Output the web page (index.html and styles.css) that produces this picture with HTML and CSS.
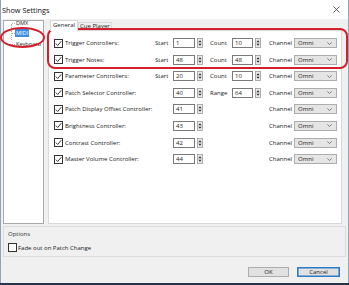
FILE: index.html
```html
<!DOCTYPE html>
<html>
<head>
<meta charset="utf-8">
<title>Show Settings</title>
<link rel="stylesheet" href="styles.css">
</head>
<body>
<div class="window">
  <div class="titlebar">
    <span class="title">Show Settings</span>
    <span class="close"><svg width="7" height="7" viewBox="0 0 7 7"><path d="M0.5 0.5L6.5 6.5M6.5 0.5L0.5 6.5" stroke="#333" stroke-width="0.8" fill="none"/></svg></span>
  </div>
  <div class="main">
    <div class="tree">
      <div class="tree-list">
        <div class="node">DMX</div>
        <div class="node"><span class="sel">MIDI</span></div>
        <div class="node">Keyboard</div>
      </div>
    </div>
    <div class="tabs">
      <div class="tabstrip">
        <div class="tab active">General</div>
        <div class="tab">Cue Player</div>
      </div>
      <div class="panel">
        <div class="row">
          <span class="cb checked"><svg width="7" height="7" viewBox="0 0 7 7"><path d="M0.8 3.6L2.7 5.5L6.3 1.2" stroke="#222" stroke-width="0.9" fill="none"/></svg></span>
          <span class="lbl">Trigger Controllers:</span>
          <span class="cap">Start</span>
          <span class="num">1</span>
          <span class="spin"><svg width="6" height="10" viewBox="0 0 6 10"><rect x="0.5" y="0.5" width="5" height="9" fill="#e9e9e9" stroke="#9a9a9a" stroke-width="0.8"/><path d="M1.4 4.2L3 2.2L4.6 4.2Z M1.4 5.8L3 7.8L4.6 5.8Z" fill="#2a2a2a"/></svg></span>
          <span class="cap c7">Count</span>
          <span class="num">10</span>
          <span class="spin"><svg width="6" height="10" viewBox="0 0 6 10"><rect x="0.5" y="0.5" width="5" height="9" fill="#e9e9e9" stroke="#9a9a9a" stroke-width="0.8"/><path d="M1.4 4.2L3 2.2L4.6 4.2Z M1.4 5.8L3 7.8L4.6 5.8Z" fill="#2a2a2a"/></svg></span>
          <span class="cap c11">Channel</span>
          <span class="dd">Omni<svg width="5" height="3" viewBox="0 0 5 3"><path d="M0.3 0.4L2.5 2.5L4.7 0.4" stroke="#555" stroke-width="0.7" fill="none"/></svg></span>
        </div>
        <div class="row">
          <span class="cb checked"><svg width="7" height="7" viewBox="0 0 7 7"><path d="M0.8 3.6L2.7 5.5L6.3 1.2" stroke="#222" stroke-width="0.9" fill="none"/></svg></span>
          <span class="lbl">Trigger Notes:</span>
          <span class="cap">Start</span>
          <span class="num">48</span>
          <span class="spin"><svg width="6" height="10" viewBox="0 0 6 10"><rect x="0.5" y="0.5" width="5" height="9" fill="#e9e9e9" stroke="#9a9a9a" stroke-width="0.8"/><path d="M1.4 4.2L3 2.2L4.6 4.2Z M1.4 5.8L3 7.8L4.6 5.8Z" fill="#2a2a2a"/></svg></span>
          <span class="cap c7">Count</span>
          <span class="num">48</span>
          <span class="spin"><svg width="6" height="10" viewBox="0 0 6 10"><rect x="0.5" y="0.5" width="5" height="9" fill="#e9e9e9" stroke="#9a9a9a" stroke-width="0.8"/><path d="M1.4 4.2L3 2.2L4.6 4.2Z M1.4 5.8L3 7.8L4.6 5.8Z" fill="#2a2a2a"/></svg></span>
          <span class="cap c11">Channel</span>
          <span class="dd">Omni<svg width="5" height="3" viewBox="0 0 5 3"><path d="M0.3 0.4L2.5 2.5L4.7 0.4" stroke="#555" stroke-width="0.7" fill="none"/></svg></span>
        </div>
        <div class="row">
          <span class="cb checked"><svg width="7" height="7" viewBox="0 0 7 7"><path d="M0.8 3.6L2.7 5.5L6.3 1.2" stroke="#222" stroke-width="0.9" fill="none"/></svg></span>
          <span class="lbl">Parameter Controllers:</span>
          <span class="cap">Start</span>
          <span class="num">20</span>
          <span class="spin"><svg width="6" height="10" viewBox="0 0 6 10"><rect x="0.5" y="0.5" width="5" height="9" fill="#e9e9e9" stroke="#9a9a9a" stroke-width="0.8"/><path d="M1.4 4.2L3 2.2L4.6 4.2Z M1.4 5.8L3 7.8L4.6 5.8Z" fill="#2a2a2a"/></svg></span>
          <span class="cap c7">Count</span>
          <span class="num">10</span>
          <span class="spin"><svg width="6" height="10" viewBox="0 0 6 10"><rect x="0.5" y="0.5" width="5" height="9" fill="#e9e9e9" stroke="#9a9a9a" stroke-width="0.8"/><path d="M1.4 4.2L3 2.2L4.6 4.2Z M1.4 5.8L3 7.8L4.6 5.8Z" fill="#2a2a2a"/></svg></span>
          <span class="cap c11">Channel</span>
          <span class="dd">Omni<svg width="5" height="3" viewBox="0 0 5 3"><path d="M0.3 0.4L2.5 2.5L4.7 0.4" stroke="#555" stroke-width="0.7" fill="none"/></svg></span>
        </div>
        <div class="row">
          <span class="cb checked"><svg width="7" height="7" viewBox="0 0 7 7"><path d="M0.8 3.6L2.7 5.5L6.3 1.2" stroke="#222" stroke-width="0.9" fill="none"/></svg></span>
          <span class="lbl">Patch Selector Controller:</span>
          <span class="num c4">40</span>
          <span class="spin"><svg width="6" height="10" viewBox="0 0 6 10"><rect x="0.5" y="0.5" width="5" height="9" fill="#e9e9e9" stroke="#9a9a9a" stroke-width="0.8"/><path d="M1.4 4.2L3 2.2L4.6 4.2Z M1.4 5.8L3 7.8L4.6 5.8Z" fill="#2a2a2a"/></svg></span>
          <span class="cap c7">Range</span>
          <span class="num">64</span>
          <span class="spin"><svg width="6" height="10" viewBox="0 0 6 10"><rect x="0.5" y="0.5" width="5" height="9" fill="#e9e9e9" stroke="#9a9a9a" stroke-width="0.8"/><path d="M1.4 4.2L3 2.2L4.6 4.2Z M1.4 5.8L3 7.8L4.6 5.8Z" fill="#2a2a2a"/></svg></span>
          <span class="cap c11">Channel</span>
          <span class="dd">Omni<svg width="5" height="3" viewBox="0 0 5 3"><path d="M0.3 0.4L2.5 2.5L4.7 0.4" stroke="#555" stroke-width="0.7" fill="none"/></svg></span>
        </div>
        <div class="row">
          <span class="cb checked"><svg width="7" height="7" viewBox="0 0 7 7"><path d="M0.8 3.6L2.7 5.5L6.3 1.2" stroke="#222" stroke-width="0.9" fill="none"/></svg></span>
          <span class="lbl">Patch Display Offset Controller:</span>
          <span class="num c4">41</span>
          <span class="spin"><svg width="6" height="10" viewBox="0 0 6 10"><rect x="0.5" y="0.5" width="5" height="9" fill="#e9e9e9" stroke="#9a9a9a" stroke-width="0.8"/><path d="M1.4 4.2L3 2.2L4.6 4.2Z M1.4 5.8L3 7.8L4.6 5.8Z" fill="#2a2a2a"/></svg></span>
          <span class="cap c11">Channel</span>
          <span class="dd">Omni<svg width="5" height="3" viewBox="0 0 5 3"><path d="M0.3 0.4L2.5 2.5L4.7 0.4" stroke="#555" stroke-width="0.7" fill="none"/></svg></span>
        </div>
        <div class="row">
          <span class="cb checked"><svg width="7" height="7" viewBox="0 0 7 7"><path d="M0.8 3.6L2.7 5.5L6.3 1.2" stroke="#222" stroke-width="0.9" fill="none"/></svg></span>
          <span class="lbl">Brightness Controller:</span>
          <span class="num c4">43</span>
          <span class="spin"><svg width="6" height="10" viewBox="0 0 6 10"><rect x="0.5" y="0.5" width="5" height="9" fill="#e9e9e9" stroke="#9a9a9a" stroke-width="0.8"/><path d="M1.4 4.2L3 2.2L4.6 4.2Z M1.4 5.8L3 7.8L4.6 5.8Z" fill="#2a2a2a"/></svg></span>
          <span class="cap c11">Channel</span>
          <span class="dd">Omni<svg width="5" height="3" viewBox="0 0 5 3"><path d="M0.3 0.4L2.5 2.5L4.7 0.4" stroke="#555" stroke-width="0.7" fill="none"/></svg></span>
        </div>
        <div class="row">
          <span class="cb checked"><svg width="7" height="7" viewBox="0 0 7 7"><path d="M0.8 3.6L2.7 5.5L6.3 1.2" stroke="#222" stroke-width="0.9" fill="none"/></svg></span>
          <span class="lbl">Contrast Controller:</span>
          <span class="num c4">42</span>
          <span class="spin"><svg width="6" height="10" viewBox="0 0 6 10"><rect x="0.5" y="0.5" width="5" height="9" fill="#e9e9e9" stroke="#9a9a9a" stroke-width="0.8"/><path d="M1.4 4.2L3 2.2L4.6 4.2Z M1.4 5.8L3 7.8L4.6 5.8Z" fill="#2a2a2a"/></svg></span>
          <span class="cap c11">Channel</span>
          <span class="dd">Omni<svg width="5" height="3" viewBox="0 0 5 3"><path d="M0.3 0.4L2.5 2.5L4.7 0.4" stroke="#555" stroke-width="0.7" fill="none"/></svg></span>
        </div>
        <div class="row">
          <span class="cb checked"><svg width="7" height="7" viewBox="0 0 7 7"><path d="M0.8 3.6L2.7 5.5L6.3 1.2" stroke="#222" stroke-width="0.9" fill="none"/></svg></span>
          <span class="lbl">Master Volume Controller:</span>
          <span class="num c4">44</span>
          <span class="spin"><svg width="6" height="10" viewBox="0 0 6 10"><rect x="0.5" y="0.5" width="5" height="9" fill="#e9e9e9" stroke="#9a9a9a" stroke-width="0.8"/><path d="M1.4 4.2L3 2.2L4.6 4.2Z M1.4 5.8L3 7.8L4.6 5.8Z" fill="#2a2a2a"/></svg></span>
          <span class="cap c11">Channel</span>
          <span class="dd">Omni<svg width="5" height="3" viewBox="0 0 5 3"><path d="M0.3 0.4L2.5 2.5L4.7 0.4" stroke="#555" stroke-width="0.7" fill="none"/></svg></span>
        </div>
      </div>
    </div>
  </div>
  <div class="options">
    <div class="opt-title">Options</div>
    <div class="opt-row"><span class="cb"></span><span>Fade out on Patch Change</span></div>
  </div>
  <div class="buttons">
    <button class="btn">OK</button>
    <button class="btn cancel">Cancel</button>
  </div>
  <div class="ann ellipse"></div>
  <div class="ann rect"></div>
</div>
</body>
</html>
```
FILE: styles.css
```css
* { box-sizing: border-box; margin: 0; padding: 0; }
html, body { width: 349px; height: 285px; overflow: hidden; }
body {
  background: #27354a;
  font-family: "Open Sans", "Noto Sans", sans-serif;
  font-size: 6px;
  color: #1b1b1b;
}
.window {
  position: relative;
  width: 349px;
  height: 283px;
  background: #f0f0f0;
  border-left: 1px solid #8ea4bd;
  border-right: 1px solid #8ea4bd;
  display: flex;
  flex-direction: column;
}
.titlebar {
  height: 19px;
  flex: none;
  background: #fff;
  display: flex;
  align-items: center;
  justify-content: space-between;
  padding: 0 8px 0 1px;
}
.title { font-size: 7.3px; color: #111; }
.close svg { display: block; }

.main {
  display: flex;
  gap: 4px;
  padding: 1px 0 0 2px;
  height: 205px;
  flex: none;
}
.tree {
  width: 41px;
  height: 204px;
  background: #fff;
  border: 1px solid #a9a9a9;
  overflow: hidden;
}
.tree-list {
  position: relative;
  margin-top: -3.5px;
  font-size: 5.6px;
}
.tree-list::before {
  content: "";
  position: absolute;
  left: 7px;
  top: 6px;
  height: 16px;
  border-left: 1px dotted #b0b0b0;
}
.node {
  position: relative;
  height: 10.5px;
  line-height: 10.5px;
  padding-left: 12px;
  white-space: nowrap;
  color: #222;
}
.node::before {
  content: "";
  position: absolute;
  left: 8px;
  top: 5px;
  width: 3px;
  border-top: 1px dotted #b0b0b0;
}
.sel {
  display: inline-block;
  margin-left: -1px;
  padding: 0 1px;
  height: 8px;
  line-height: 8px;
  background: #3b8ee6;
  color: #fff;
}

.tabs { width: 294px; display: flex; flex-direction: column; }
.tabstrip {
  height: 10px;
  display: flex;
  align-items: flex-end;
  padding-left: 2px;
}
.tab {
  height: 8px;
  line-height: 7px;
  padding: 0 1px;
  border: 1px solid #d9d9d9;
  border-bottom: none;
  background: #f0f0f0;
  white-space: nowrap;
}
.tab.active {
  height: 11px;
  line-height: 9px;
  padding: 0 2px;
  margin-bottom: -1px;
  background: #fff;
  position: relative;
  z-index: 1;
}
.panel {
  height: 194px;
  background: #fff;
  border: 1px solid #d9d9d9;
  padding: 7px 0 0 5px;
  display: flex;
  flex-direction: column;
  gap: 6.6px;
}
.row {
  display: grid;
  grid-template-columns: 11px 90px 18px 22px 8px 7px 22px 21px 8px 8px 25px 43px;
  height: 10px;
  align-items: center;
  white-space: nowrap;
}
.cb {
  width: 9px;
  height: 9px;
  border: 1px solid #333;
  background: #fff;
  display: flex;
  align-items: center;
  justify-content: center;
}
.cb svg { display: block; }
.lbl { line-height: 10px; }
.cap { line-height: 10px; }
.c4 { grid-column: 4; }
.c7 { grid-column: 7; }
.c11 { grid-column: 11; }
.num {
  height: 10px;
  line-height: 8px;
  border: 1px solid #7a7a7a;
  background: #fff;
  padding-left: 2px;
}
.spin { padding-left: 2px; height: 10px; }
.spin svg { display: block; }
.dd {
  height: 10px;
  background: #e5e5e5;
  border: 1px solid #adadad;
  display: flex;
  align-items: center;
  justify-content: space-between;
  padding: 0 4px 0 3px;
}
.dd svg { display: block; }

.options {
  margin: 2px 2px 0 2px;
  height: 31px;
  flex: none;
  border: 1px solid #dcdcdc;
  padding: 3px 0 0 4px;
}
.opt-title { height: 8px; line-height: 8px; color: #333; }
.opt-row {
  margin-top: 5px;
  display: flex;
  align-items: center;
  gap: 1px;
  height: 9px;
  white-space: nowrap;
}
.buttons {
  display: flex;
  justify-content: flex-end;
  gap: 8px;
  padding: 10px 8px 0 0;
}
.btn {
  width: 41px;
  height: 10px;
  font-family: inherit;
  font-size: 6px;
  line-height: 8px;
  color: #1b1b1b;
  background: #e1e1e1;
  border: 1px solid #adadad;
}
.btn.cancel {
  width: 43px;
  border-color: #2c7bc7;
  box-shadow: inset 0 0 0 0.6px #2c7bc7;
}

.ann {
  position: absolute;
  border: 2px solid #d3202c;
  pointer-events: none;
}
.ann.ellipse {
  left: -1px;
  top: 27px;
  width: 45px;
  height: 21px;
  border-radius: 50%;
}
.ann.rect {
  left: 46px;
  top: 28px;
  width: 301px;
  height: 41px;
  border-radius: 8px;
}
```
